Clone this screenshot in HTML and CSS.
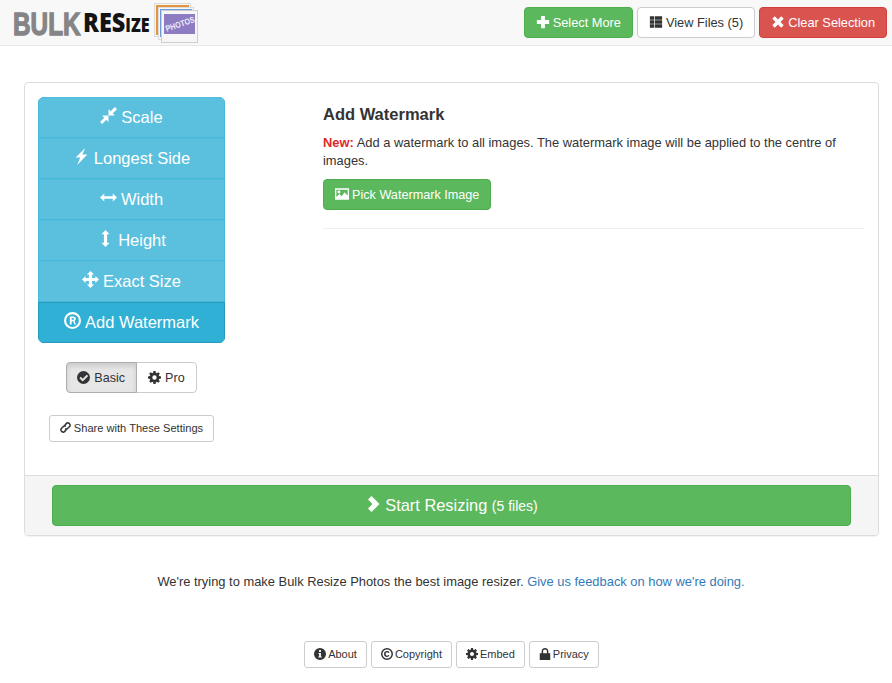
FILE: index.html
```html
<!DOCTYPE html>
<html lang="en">
<head>
<meta charset="utf-8">
<title>Bulk Resize Photos</title>
<link rel="stylesheet" href="styles.css">
</head>
<body>
<svg class="defs" width="0" height="0" aria-hidden="true">
  <symbol id="i-plus" viewBox="0 0 16 16"><path d="M5.800 1h4.400v4.800h4.800v4.400h-4.800v4.800H5.800v-4.800H1V5.800h4.800z"/></symbol>
  <symbol id="i-list" viewBox="0 0 16 16"><path d="M1 1.500h5v3.800H1zM6.800 1.500H15v3.800H6.800zM1 6.100h5v3.800H1zM6.800 6.100H15v3.800H6.800zM1 10.700h5v3.800H1zM6.800 10.700H15v3.800H6.800z"/></symbol>
  <symbol id="i-x" viewBox="0 0 16 16"><path d="M4.300 1.500 8 5.200l3.700-3.700 2.800 2.800L10.800 8l3.700 3.700-2.800 2.800L8 10.800l-3.700 3.700-2.800-2.800L5.200 8 1.500 4.300z"/></symbol>
  <symbol id="i-small" viewBox="0 0 16 16"><path d="M14 0 16 2l-4 4 2 2H8V2l2 2zM2 16 0 14l4-4-2-2h6v6l-2-2z"/></symbol>
  <symbol id="i-flash" viewBox="0 0 16 16"><path d="M11.500 0 2.500 9h4.300L4 16l9.500-10H8.800z"/></symbol>
  <symbol id="i-h" viewBox="0 0 16 16"><path d="M0 8l4-3.800v2.600h8V4.200L16 8l-4 3.800V9.200H4v2.600z"/></symbol>
  <symbol id="i-v" viewBox="0 0 16 16"><path d="M8 0l3.800 4H9.500v8h2.300L8 16l-3.800-4h2.300V4H4.200z"/></symbol>
  <symbol id="i-move" viewBox="0 0 16 16"><path d="M8 0l3.400 3.400H9.500v3.100h3.100V4.600L16 8l-3.400 3.400V9.500H9.500v3.100h1.900L8 16l-3.400-3.400h1.900V9.500H3.400v1.900L0 8l3.400-3.400v1.900h3.100V3.400H4.600z"/></symbol>
  <symbol id="i-reg" viewBox="0 0 16 16"><path fill-rule="evenodd" d="M8 0a8 8 0 1 1 0 16A8 8 0 0 1 8 0zm0 2a6 6 0 1 0 0 12A6 6 0 0 0 8 2zM5.500 4.300h3.200c1.500 0 2.400.8 2.400 2.100 0 1-.5 1.600-1.300 1.900l1.500 3.400H9.900L8.600 8.600H7.200v3.100H5.500zm1.700 1.300v1.700h1.300c.6 0 .9-.3.900-.9 0-.5-.3-.8-.9-.8z"/></symbol>
  <symbol id="i-check" viewBox="0 0 16 16"><path fill-rule="evenodd" d="M8 0a8 8 0 1 1 0 16A8 8 0 0 1 8 0zM12 4.500 7 9.500 4.700 7.200 3 8.900l4 4 6.800-6.700z"/></symbol>
  <symbol id="i-cog" viewBox="0 0 16 16"><path fill-rule="evenodd" d="M6.700 0h2.600l.4 2.300 1.100.5 1.900-1.400 1.900 1.900-1.400 1.900.5 1.100 2.300.4v2.600l-2.300.4-.5 1.100 1.400 1.900-1.900 1.900-1.900-1.400-1.100.5-.4 2.300H6.700l-.4-2.300-1.100-.5-1.900 1.400-1.900-1.900 1.400-1.900-.5-1.100L0 9.300V6.700l2.300-.4.500-1.100-1.400-1.900 1.900-1.900 1.900 1.400 1.100-.5zM8 5.300a2.700 2.700 0 1 0 0 5.400 2.700 2.700 0 0 0 0-5.400z"/></symbol>
  <symbol id="i-link" viewBox="0 0 16 16"><path fill="none" stroke="currentColor" stroke-width="2.200" d="M7 4.500 9.500 2a2.500 2.500 0 0 1 3.600 0l.9.900a2.500 2.500 0 0 1 0 3.600L11 9.500a2.500 2.500 0 0 1-3.500 0M9 11.500 6.500 14a2.500 2.500 0 0 1-3.600 0l-.9-.9a2.500 2.500 0 0 1 0-3.600L5 6.500a2.500 2.500 0 0 1 3.500 0"/></symbol>
  <symbol id="i-pic" viewBox="0 0 16 16"><path fill-rule="evenodd" d="M0 1.500h16v13H0zm1.500 1.500v8.500l3.500-3.500 2.500 2.500 3.500-4.500 3.500 4V3zM4.500 4a1.700 1.700 0 1 1 0 3.400 1.700 1.700 0 0 1 0-3.400z"/></symbol>
  <symbol id="i-chev" viewBox="0 0 16 16"><path d="M5.500 0 13.500 8l-8 8L2 12.500 6.500 8 2 3.500z"/></symbol>
  <symbol id="i-info" viewBox="0 0 16 16"><path fill-rule="evenodd" d="M8 0a8 8 0 1 1 0 16A8 8 0 0 1 8 0zM6.800 2.800v2.400h2.400V2.800zM5.800 6.500v1.300h1v3.400h-1v1.300h4.400v-1.300h-1V6.500z"/></symbol>
  <symbol id="i-copy" viewBox="0 0 16 16"><path fill-rule="evenodd" d="M8 0a8 8 0 1 1 0 16A8 8 0 0 1 8 0zm0 2a6 6 0 1 0 0 12A6 6 0 0 0 8 2zm0 2c1.500 0 2.700.7 3.300 1.900L9.700 6.700C9.300 6 8.800 5.700 8 5.700 6.900 5.700 6.200 6.700 6.200 8s.7 2.300 1.800 2.300c.8 0 1.300-.3 1.700-1l1.600.8C10.700 11.300 9.500 12 8 12c-2.300 0-4-1.700-4-4s1.700-4 4-4z"/></symbol>
  <symbol id="i-lock" viewBox="0 0 16 16"><path fill-rule="evenodd" d="M8 0c2.800 0 4.500 1.700 4.500 4.500V7H15v9H1V7h2.500V4.500C3.500 1.700 5.200 0 8 0zm0 2C6.200 2 5.500 3 5.500 4.500V7h5V4.500C10.500 3 9.800 2 8 2z"/></symbol>
</svg>

<header class="navbar">
  <a class="brand" href="#">
    <span class="brand-bulk">BULK</span>
    <span class="brand-resize">RES<span class="brand-small">IZE</span></span>
    <svg class="brand-mark" width="46" height="42" viewBox="0 0 46 42">
      <rect x="0.500" y="1.500" width="36" height="33" fill="#f6f6f6" stroke="#dcdcdc"/>
      <rect x="2" y="3" width="33" height="30" fill="#e2953d"/>
      <rect x="4.500" y="5.500" width="35" height="32" fill="#f6f6f6" stroke="#dcdcdc"/>
      <rect x="6" y="7" width="32" height="28" fill="#6d9bd5"/>
      <rect x="7.500" y="8.500" width="36" height="32" fill="#f6f6f6" stroke="#cfcfcf"/>
      <rect x="10" y="12" width="31" height="20" fill="#8e7cc3"/>
      <text x="26" y="25" class="brand-photos" transform="rotate(-19 26 22)" text-anchor="middle" textLength="30" lengthAdjust="spacingAndGlyphs">PHOTOS</text>
    </svg>
  </a>
  <nav class="nav-actions">
    <a class="btn btn-success" href="#"><svg class="ico"><use href="#i-plus"/></svg>Select More</a>
    <a class="btn btn-default" href="#"><svg class="ico"><use href="#i-list"/></svg>View Files (5)</a>
    <a class="btn btn-danger" href="#"><svg class="ico"><use href="#i-x"/></svg>Clear Selection</a>
  </nav>
</header>

<main class="panel">
  <div class="panel-body">
    <aside class="side">
      <div class="tabs">
        <a class="tab" href="#"><svg class="ico"><use href="#i-small"/></svg>Scale</a>
        <a class="tab" href="#"><svg class="ico"><use href="#i-flash"/></svg>Longest Side</a>
        <a class="tab" href="#"><svg class="ico"><use href="#i-h"/></svg>Width</a>
        <a class="tab" href="#"><svg class="ico"><use href="#i-v"/></svg>Height</a>
        <a class="tab" href="#"><svg class="ico"><use href="#i-move"/></svg>Exact Size</a>
        <a class="tab tab-active" href="#"><svg class="ico"><use href="#i-reg"/></svg>Add Watermark</a>
      </div>
      <div class="mode-group">
        <a class="btn-mode btn-mode-on" href="#"><svg class="ico"><use href="#i-check"/></svg>Basic</a>
        <a class="btn-mode" href="#"><svg class="ico"><use href="#i-cog"/></svg>Pro</a>
      </div>
      <a class="btn-sm" href="#"><svg class="ico"><use href="#i-link"/></svg>Share with These Settings</a>
    </aside>
    <section class="content">
      <h4>Add Watermark</h4>
      <p><strong class="new">New:</strong> Add a watermark to all images. The watermark image will be applied to the centre of images.</p>
      <a class="btn btn-success btn-pick" href="#"><svg class="ico"><use href="#i-pic"/></svg>Pick Watermark Image</a>
      <hr>
    </section>
  </div>
  <div class="panel-footer">
    <a class="btn-start" href="#"><svg class="ico"><use href="#i-chev"/></svg>Start Resizing <small>(5 files)</small></a>
  </div>
</main>

<p class="feedback">We're trying to make Bulk Resize Photos the best image resizer. <a href="#">Give us feedback on how we're doing.</a></p>

<footer class="foot">
  <a class="btn-foot" href="#"><svg class="ico"><use href="#i-info"/></svg>About</a>
  <a class="btn-foot" href="#"><svg class="ico"><use href="#i-copy"/></svg>Copyright</a>
  <a class="btn-foot" href="#"><svg class="ico"><use href="#i-cog"/></svg>Embed</a>
  <a class="btn-foot" href="#"><svg class="ico"><use href="#i-lock"/></svg>Privacy</a>
</footer>
</body>
</html>
```
FILE: styles.css
```css
* { box-sizing: border-box; }
html, body { margin: 0; padding: 0; }
body {
  font-family: "Liberation Sans", Arial, sans-serif;
  font-size: 13px;
  line-height: 20px;
  color: #333;
  background: #fff;
  height: 683px;
  overflow: hidden;
}
a { text-decoration: none; }
.defs { position: absolute; }
.ico { width: 14px; height: 14px; fill: currentColor; flex: none; display: inline-block; vertical-align: -2px; margin-right: 3px; }

.navbar {
  height: 46px;
  background: #f8f8f8;
  border-bottom: 1px solid #e7e7e7;
  display: flex;
  justify-content: space-between;
  padding: 0 5px 0 13px;
}
.brand { display: flex; align-items: flex-start; color: #111; height: 45px; }
.brand-bulk {
  font-family: "Liberation Sans", sans-serif;
  font-weight: 700;
  font-size: 32px;
  line-height: 30px;
  color: #858585;
  -webkit-text-stroke: 1.300px #858585;
  margin-top: 9px;
  width: 70px;
  transform: scaleX(.76);
  transform-origin: left center;
}
.brand-resize {
  font-family: "Open Sans", sans-serif;
  font-weight: 800;
  font-size: 27px;
  line-height: 30px;
  color: #141414;
  margin-top: 7px;
  width: 71px;
  white-space: nowrap;
  transform: scaleX(.87);
  transform-origin: left center;
}
.brand-small { font-size: 18.500px; }
.brand-mark { margin-top: 2px; }
.brand-photos { font: 700 8.500px "Liberation Sans", sans-serif; fill: #eeeaf8; }

.nav-actions { display: flex; gap: 4px; margin-top: 7px; }
.btn {
  display: inline-block;
  height: 31px;
  padding: 5px 11px;
  font-size: 12.800px;
  line-height: 20px;
  border: 1px solid transparent;
  border-radius: 4px;
  white-space: nowrap;
}
.btn-pick { font-size: 12.650px; }
.btn-success { background: #5cb85c; border-color: #4cae4c; color: #fff; }
.btn-default { background: #fff; border-color: #ccc; color: #333; }
.btn-danger { background: #d9534f; border-color: #d43f3a; color: #fff; }

.panel {
  margin: 36px 13px 0 24px;
  height: 454px;
  border: 1px solid #ddd;
  border-radius: 4px;
  display: flex;
  flex-direction: column;
  box-shadow: 0 1px 1px rgba(0,0,0,.05);
}
.panel-body { flex: 1; display: flex; padding: 14px 14px 0 13px; }
.side { width: 187px; display: flex; flex-direction: column; align-items: center; }
.tabs {
  width: 187px;
  border-radius: 6px;
  overflow: hidden;
  background: #5bc0de;
}
.tab {
  display: block;
  height: 41px;
  padding-top: 8px;
  text-align: center;
  font-size: 16.500px;
  line-height: 22px;
  color: #fff;
  background: #5bc0de;
  border: 1px solid #46b8da;
  border-top-color: #52bcdc;
}
.tab .ico { width: 17px; height: 17px; vertical-align: -1px; margin-right: 4px; }
.tab-active { background: #31b0d5; border-color: #269abc; }
.mode-group { display: flex; margin-top: 19px; }
.btn-mode {
  height: 31px;
  padding: 5px 11px;
  font-size: 12.600px;
  border: 1px solid #ccc;
  color: #333;
  background: #fff;
  border-radius: 0 4px 4px 0;
  margin-left: -1px;
}
.btn-mode .ico { width: 13px; height: 13px; margin-right: 4px; }
.btn-mode-on {
  background: #e6e6e6;
  border-color: #adadad;
  border-radius: 4px 0 0 4px;
  box-shadow: inset 0 3px 5px rgba(0,0,0,.125);
  margin-left: 0;
  position: relative;
  padding: 5px 11px 5px 10px;
}
.btn-sm {
  margin-top: 22px;
  height: 27px;
  padding: 3px 10px 5px;
  font-size: 11.100px;
  line-height: 18px;
  color: #333;
  border: 1px solid #ccc;
  border-radius: 3px;
  white-space: nowrap;
}
.btn-sm .ico { width: 11px; height: 11px; vertical-align: -1px; }
.content { margin-left: 98px; flex: 1; }
.content h4 { margin: 8px 0 11px; font-size: 16.500px; line-height: 18px; font-weight: 700; }
.content p { margin: 0 0 9px; line-height: 18px; font-size: 12.900px; }
.new { color: #e12a2a; }
.content hr { border: 0; border-top: 1px solid #eee; margin: 18px 0 0; }
.panel-footer {
  height: 60px;
  padding: 9px 27px;
  background: #f5f5f5;
  border-top: 1px solid #ddd;
  border-radius: 0 0 3px 3px;
}
.btn-start {
  display: block;
  height: 41px;
  background: #5cb85c;
  border: 1px solid #4cae4c;
  border-radius: 4px;
  color: #fff;
  text-align: center;
  font-size: 16.400px;
  line-height: 39px;
  padding-left: 1px;
}
.btn-start .ico { width: 16px; height: 16px; vertical-align: -1px; margin-right: 3px; }
.btn-start small { font-size: 14px; }

.feedback { margin: 36px 0 0; text-align: center; font-size: 12.900px; line-height: 20px; padding-left: 10px; }
.feedback a { color: #337ab7; }
.foot { display: flex; justify-content: center; gap: 4px; margin-top: 49px; padding-left: 11px; }
.btn-foot {
  height: 27px;
  padding: 3px 9px 5px;
  font-size: 11px;
  line-height: 18px;
  color: #333;
  border: 1px solid #ccc;
  border-radius: 3px;
  white-space: nowrap;
}
.btn-foot .ico { width: 12px; height: 12px; vertical-align: -2px; margin-right: 2px; }
```
